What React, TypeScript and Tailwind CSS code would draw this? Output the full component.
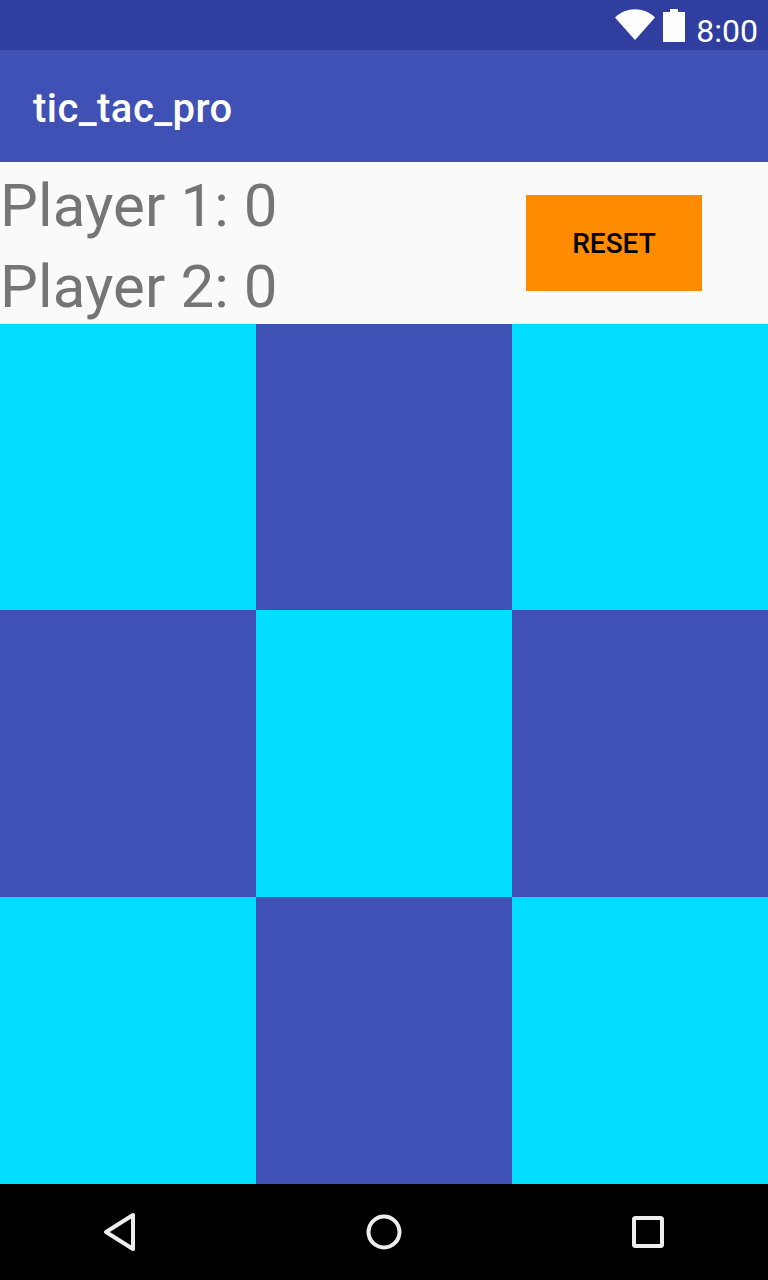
export default function App() {
  const cyan = "bg-[#00ddff]";
  const blue = "bg-[#3f51b5]";
  return (
    <div className="w-[768px] h-[1280px] flex flex-col overflow-hidden bg-[#fafafa]" style={{ fontFamily: "Roboto, sans-serif" }}>
      <div className="h-[50px] bg-[#303f9f] flex items-center justify-end shrink-0">
        <svg width="40" height="32" viewBox="0 0 40 32" className="mr-[8px]">
          <path d="M0 8.5 C11 -2.5 29 -2.5 40 8.5 L20 31 Z" fill="#fff" />
        </svg>
        <svg width="22" height="33" viewBox="0 0 22 33" className="mt-[1px] mr-[11px]">
          <path d="M7 0 H15 V3 H22 V33 H0 V3 H7 Z" fill="#fff" />
        </svg>
        <span className="text-white text-[32px] leading-none mr-[10px] mt-[12px]">8:00</span>
      </div>
      <div className="h-[112px] bg-[#3f51b5] flex items-center pl-[33px] pt-[6px] shrink-0">
        <span className="text-white text-[40px] font-medium leading-none tracking-[0.45px]">tic_tac_pro</span>
      </div>
      <div className="h-[162px] flex items-center shrink-0">
        <div className="w-[526px] flex flex-col pt-[6px] text-[#757575] text-[60px] leading-[81px] tracking-[0.1px]">
          <span>Player 1: 0</span>
          <span>Player 2: 0</span>
        </div>
        <div className="w-[176px] h-[96px] pt-[2px] bg-[#ff8c00] flex items-center justify-center text-black text-[28px] font-medium">RESET</div>
      </div>
      <div className="grid grid-cols-3 grid-rows-[286px_287px_287px] shrink-0">
        <div className={cyan} /><div className={blue} /><div className={cyan} />
        <div className={blue} /><div className={cyan} /><div className={blue} />
        <div className={cyan} /><div className={blue} /><div className={cyan} />
      </div>
      <div className="h-[96px] bg-black flex items-center justify-between pl-[102px] pr-[104px] shrink-0">
        <svg width="36" height="40" viewBox="0 0 36 40" fill="none" stroke="#eee" strokeWidth="4" strokeLinejoin="round"><path d="M31 3 V37 L4 20 Z" /></svg>
        <svg width="36" height="36" viewBox="0 0 36 36" fill="none" stroke="#eee" strokeWidth="4" className="mr-[2px]"><circle cx="18" cy="18" r="15.5" /></svg>
        <svg width="32" height="32" viewBox="0 0 32 32" fill="none" stroke="#eee" strokeWidth="4" strokeLinejoin="round"><rect x="2" y="2" width="28" height="28" rx="1.5" /></svg>
      </div>
    </div>
  );
}
